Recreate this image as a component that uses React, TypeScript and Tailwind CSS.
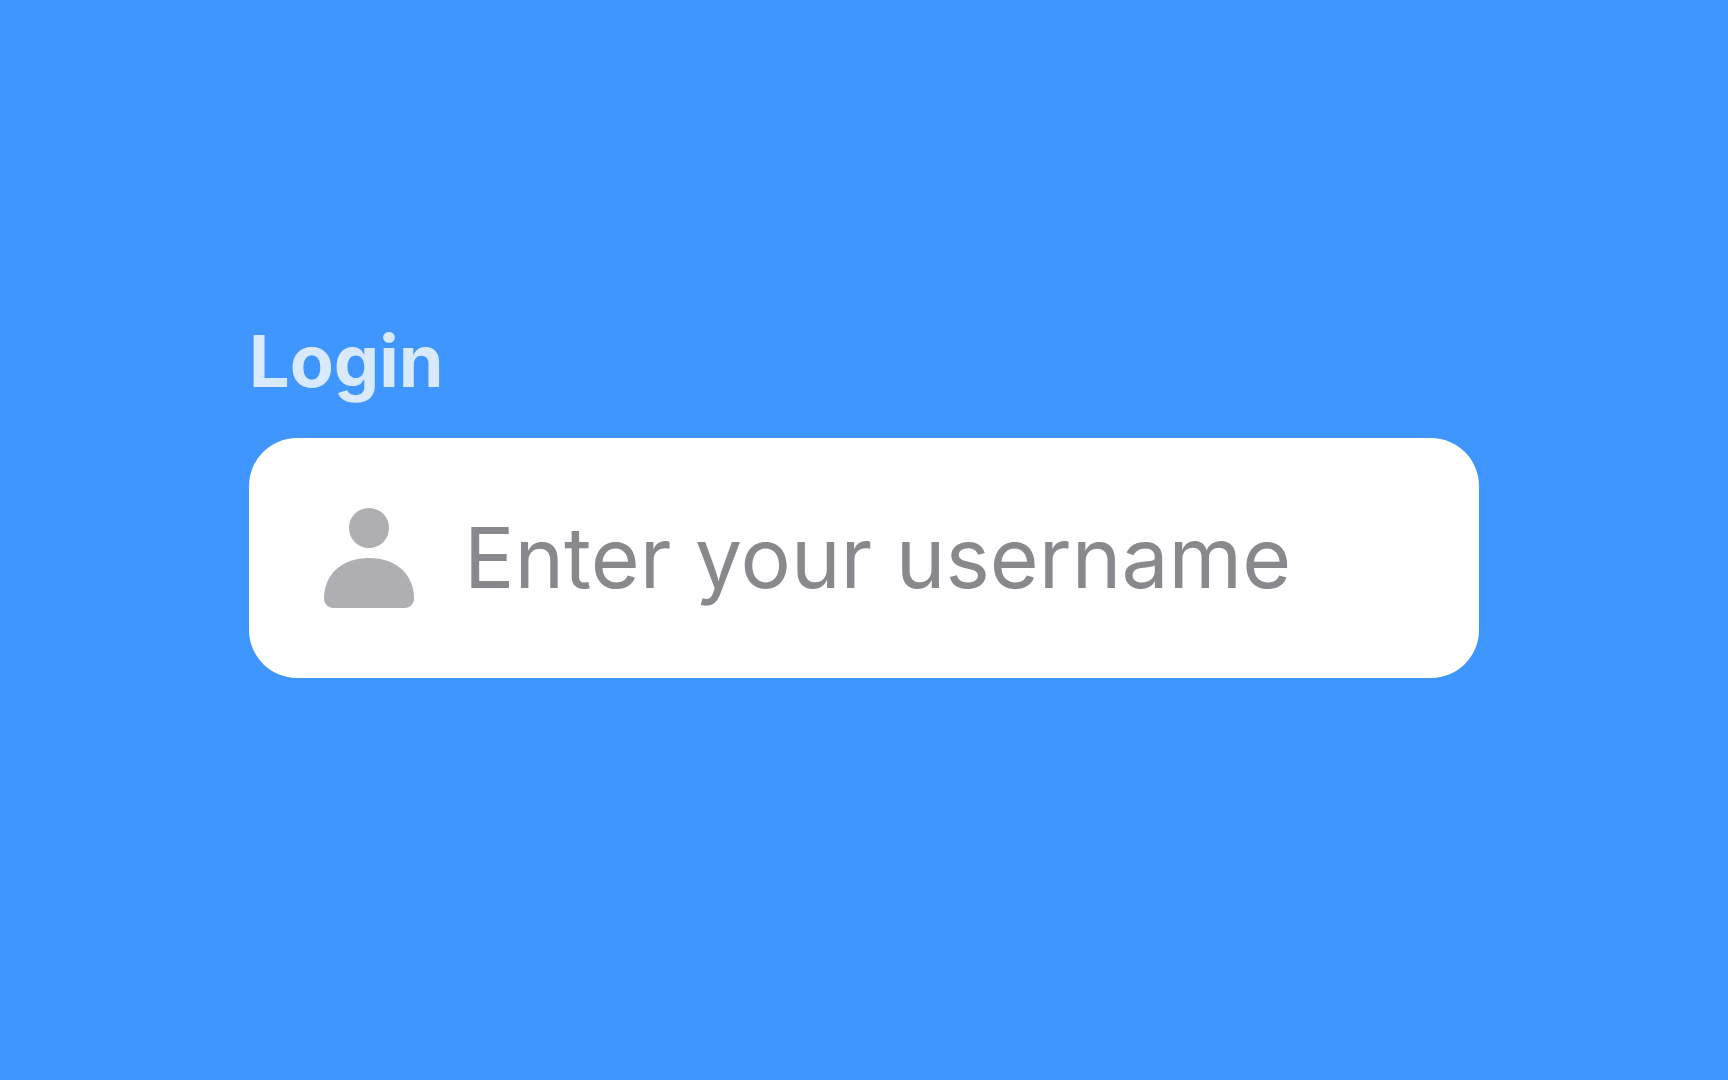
import { useState } from 'react'

function UserIcon() {
  return (
    <svg viewBox="0 0 90 100" className="h-[100px] w-[90px] shrink-0 fill-[#aeaeb3]" aria-hidden="true">
      <circle cx="45" cy="20" r="20" />
      <path d="M0 91C0 67 17 50 45 50s45 17 45 41a9 9 0 0 1-9 9H9a9 9 0 0 1-9-9Z" />
    </svg>
  )
}

export default function App() {
  const [username, setUsername] = useState('')

  return (
    <main className="flex min-h-screen flex-col justify-center bg-[#4096ff] px-[249px] pb-[86px] font-[Inter,sans-serif]">
      <label htmlFor="username" className="text-[72px] leading-[90px] font-bold text-white/80">
        Login
      </label>
      <div className="mt-8 flex h-60 items-center gap-[50px] rounded-[48px] bg-white px-[75px]">
        <UserIcon />
        <input
          id="username"
          type="text"
          autoComplete="username"
          placeholder="Enter your username"
          value={username}
          onChange={(e) => setUsername(e.target.value)}
          className="min-w-0 flex-1 text-[84px] leading-[104px] text-[#1c1c1e] outline-none placeholder:text-[#88888d]"
        />
      </div>
    </main>
  )
}
